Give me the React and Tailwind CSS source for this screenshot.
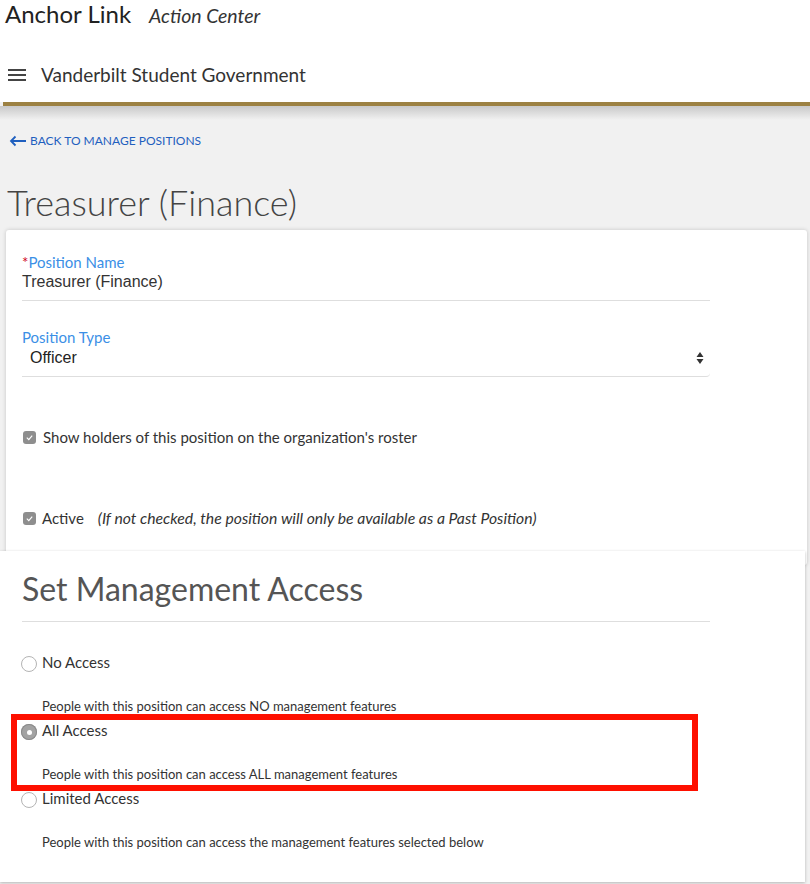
import React from "react";

const SS = { fontFamily: "Lato, 'Noto Sans', sans-serif" };

function Check() {
  return (
    <span className="inline-flex h-[13px] w-[13px] shrink-0 items-center justify-center rounded-[3px] bg-[#8e8e8e]">
      <svg width="9" height="9" viewBox="0 0 10 10">
        <path d="M2 5.2 L4.2 7.3 L8 2.8" fill="none" stroke="#fff" strokeWidth="1.3" />
      </svg>
    </span>
  );
}

function Radio({ checked }) {
  if (checked)
    return (
      <span className="mt-[4px] flex h-[16px] w-[16px] shrink-0 items-center justify-center rounded-full bg-[#a3a3a3] shadow-[inset_0_0_0_1px_#8a8a8a]">
        <span className="h-[5px] w-[5px] rounded-full bg-white" />
      </span>
    );
  return <span className="mt-[4px] block h-[16px] w-[16px] shrink-0 rounded-full border border-[#b4b4b4] bg-white" />;
}

function Option({ label, desc, checked, first }) {
  return (
    <div className={first ? "flex flex-col" : "mt-[4px] flex flex-col"}>
      <div className="flex h-[20px] items-start gap-[5px]">
        <Radio checked={checked} />
        <span className="text-[15px] leading-[20px] text-[#333]">{label}</span>
      </div>
      <div className="mt-[24px] pl-[21px] text-[13px] leading-[20px] text-[#333]">{desc}</div>
    </div>
  );
}

export default function App() {
  return (
    <div className="relative min-h-[884px] w-[810px] overflow-hidden bg-[#f1f1f1]" style={SS}>
      <header className="bg-white">
        <div className="flex h-[28px] items-baseline pl-[5px]">
          <span className="text-[24px] leading-[28px] text-[#222]">Anchor Link</span>
          <span className="ml-[18px] text-[19.5px] italic leading-[28px] text-[#333]">Action Center</span>
        </div>
        <div className="flex h-[74px] items-center pl-[8px] pt-[20px]">
          <svg width="18" height="14" viewBox="0 0 18 14">
            <rect x="0" y="1" width="18" height="2" fill="#444" />
            <rect x="0" y="6" width="18" height="2" fill="#444" />
            <rect x="0" y="11" width="18" height="2" fill="#444" />
          </svg>
          <span className="ml-[15px] text-[19px] leading-[24px] text-[#333]">Vanderbilt Student Government</span>
        </div>
      </header>
      <div className="ml-[3px] h-[4px] bg-[#9c8142]" />
      <div className="h-[14px] bg-gradient-to-b from-[#c9c9c9] to-[#f1f1f1]" />

      <a className="mt-[13px] flex h-[16px] items-center pl-[9px] text-[12px] leading-[16px] text-[#1f5fbf]">
        <svg width="18" height="12" viewBox="0 0 18 12" className="mr-[3px]">
          <path d="M17 6 H2 M6.5 1.5 L2 6 L6.5 10.5" fill="none" stroke="#1f5fbf" strokeWidth="1.8" />
        </svg>
        BACK TO MANAGE POSITIONS
      </a>

      <h1 className="mt-[31px] pl-[7px] text-[36px] font-light leading-[44px] text-[#444]">Treasurer (Finance)</h1>

      <div className="relative ml-[6px] mr-[3px] mt-[6px] rounded-[3px] bg-white pb-[37px] shadow-[0_0_4px_rgba(0,0,0,0.18)]">
        <div className="w-[704px] pl-[16px] pt-[22px]">
          <label className="block text-[15px] leading-[20px] text-[#3b8fe6]">
            <span className="text-[#d0021b]">*</span>Position Name
          </label>
          <div className="border-b border-[#dedede] pb-[9px] text-[16px] leading-[19px] text-[#333]" style={{ fontFamily: "'Liberation Sans', Arial, sans-serif" }}>
            Treasurer (Finance)
          </div>

          <label className="mt-[26px] block text-[15px] leading-[20px] text-[#3b8fe6]">Position Type</label>
          <div className="flex items-center justify-between rounded-br-[4px] border-b border-[#dedede] pb-[9px] pl-[8px] pr-[6px] pt-[1px] text-[16px] leading-[19px] text-[#222]" style={{ fontFamily: "'Liberation Sans', Arial, sans-serif" }}>
            <span>Officer</span>
            <svg width="8" height="14" viewBox="0 0 8 14">
              <path d="M4 1 L7.5 6 H0.5 Z M4 13 L7.5 8 H0.5 Z" fill="#333" />
            </svg>
          </div>

          <div className="mt-[50px] flex h-[20px] items-center gap-[7px] pl-[1px]">
            <Check />
            <span className="text-[15px] leading-[20px] text-[#333]">Show holders of this position on the organization's roster</span>
          </div>

          <div className="mt-[61px] flex h-[20px] items-center gap-[6px] pl-[1px]">
            <Check />
            <span className="text-[15px] leading-[20px] text-[#333]">Active</span>
            <span className="ml-[8px] text-[15.75px] italic leading-[20px] text-[#333]">(If not checked, the position will only be available as a Past Position)</span>
          </div>
        </div>
      </div>

      <div className="relative mr-[5px] -mt-[14px] bg-white pb-[30px] pl-[22px] shadow-[0_1px_3px_rgba(0,0,0,0.25)]">
        <div className="w-[688px]">
          <h2 className="border-b border-[#dedede] pb-[12px] pt-[18px] text-[32px] leading-[40px] text-[#555]">Set Management Access</h2>
          <div className="-ml-[1px] mt-[30px] flex flex-col">
            <Option first label="No Access" desc="People with this position can access NO management features" />
            <Option label="All Access" desc="People with this position can access ALL management features" checked />
            <Option label="Limited Access" desc="People with this position can access the management features selected below" />
          </div>
        </div>
      </div>

      <div className="pointer-events-none absolute left-[11px] top-[714px] h-[77px] w-[687px] border-[6px] border-[#fe1000]" />
    </div>
  );
}
